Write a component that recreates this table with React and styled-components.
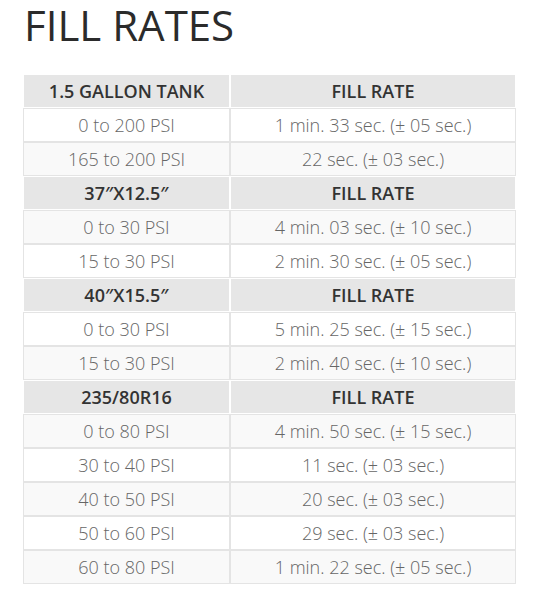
import React from "react";
import styled, { createGlobalStyle } from "styled-components";

const Global = createGlobalStyle`
  html, body { margin: 0; padding: 0; background: #fff; }
  body { font-family: "Open Sans", "Liberation Sans", sans-serif; }
`;

const Page = styled.div`
  padding: 0 0 0 23px;
`;

const Title = styled.h1`
  margin: 0 0 24px 1px;
  font-size: 42px;
  line-height: 50px;
  font-weight: 400;
  color: #2b2b2b;
  letter-spacing: 0;
`;

const Table = styled.table`
  width: 493px;
  border-collapse: separate;
  border-spacing: 0;
  table-layout: fixed;
  tbody tr:nth-child(odd) td { background: #f9f9f9; }
`;

const Head = styled.th`
  background: #e6e6e6;
  border: 1px solid #fff;
  padding: 3px 6px;
  font-size: 18px;
  line-height: 26px;
  font-weight: 600;
  color: #333;
  text-align: center;
`;

const Cell = styled.td`
  background: #fff;
  border: 1px solid #e4e4e4;
  padding: 3px 6px;
  font-size: 18px;
  line-height: 26px;
  font-weight: 300;
  color: #666;
  text-align: center;
`;

const groups = [
  { name: "1.5 GALLON TANK", rows: [["0 to 200 PSI", "1 min. 33 sec. (± 05 sec.)"], ["165 to 200 PSI", "22 sec. (± 03 sec.)"]] },
  { name: "37″X12.5″", rows: [["0 to 30 PSI", "4 min. 03 sec. (± 10 sec.)"], ["15 to 30 PSI", "2 min. 30 sec. (± 05 sec.)"]] },
  { name: "40″X15.5″", rows: [["0 to 30 PSI", "5 min. 25 sec. (± 15 sec.)"], ["15 to 30 PSI", "2 min. 40 sec. (± 10 sec.)"]] },
  {
    name: "235/80R16",
    rows: [
      ["0 to 80 PSI", "4 min. 50 sec. (± 15 sec.)"],
      ["30 to 40 PSI", "11 sec. (± 03 sec.)"],
      ["40 to 50 PSI", "20 sec. (± 03 sec.)"],
      ["50 to 60 PSI", "29 sec. (± 03 sec.)"],
      ["60 to 80 PSI", "1 min. 22 sec. (± 05 sec.)"],
    ],
  },
];

export default function App() {
  const rows = [];
  groups.forEach((g, gi) => {
    rows.push(
      <tr key={`h${gi}`}>
        <Head>{g.name}</Head>
        <Head>FILL RATE</Head>
      </tr>
    );
    g.rows.forEach((r, ri) => {
      rows.push(
        <tr key={`r${gi}-${ri}`}>
          <Cell>{r[0]}</Cell>
          <Cell>{r[1]}</Cell>
        </tr>
      );
    });
  });
  return (
    <>
      <Global />
      <Page>
        <Title>FILL RATES</Title>
        <Table>
          <colgroup>
            <col style={{ width: 207 }} />
            <col style={{ width: 286 }} />
          </colgroup>
          <tbody>{rows}</tbody>
        </Table>
      </Page>
    </>
  );
}
